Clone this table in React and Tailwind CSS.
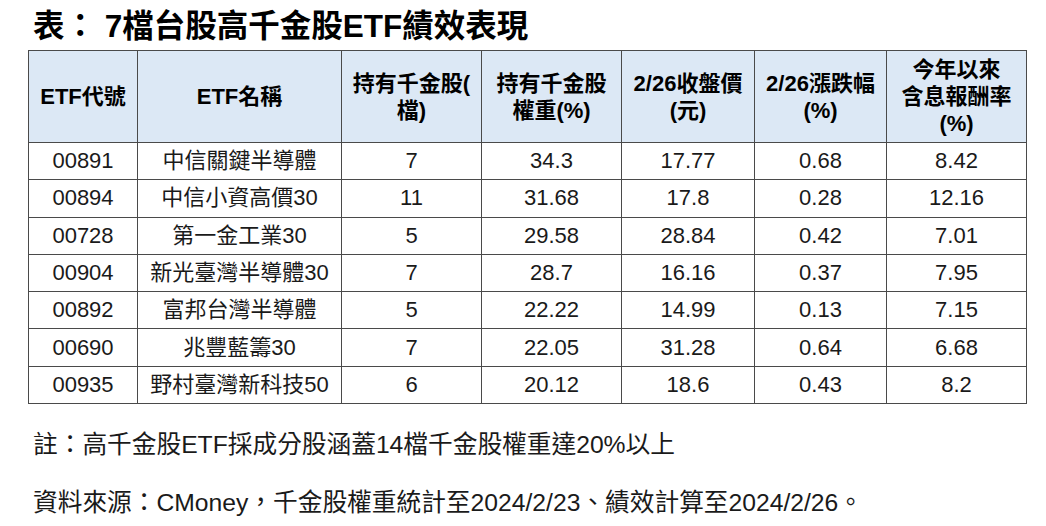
import React from 'react';

const rows = [
  ['00891', '中信關鍵半導體', '7', '34.3', '17.77', '0.68', '8.42'],
  ['00894', '中信小資高價30', '11', '31.68', '17.8', '0.28', '12.16'],
  ['00728', '第一金工業30', '5', '29.58', '28.84', '0.42', '7.01'],
  ['00904', '新光臺灣半導體30', '7', '28.7', '16.16', '0.37', '7.95'],
  ['00892', '富邦台灣半導體', '5', '22.22', '14.99', '0.13', '7.15'],
  ['00690', '兆豐藍籌30', '7', '22.05', '31.28', '0.64', '6.68'],
  ['00935', '野村臺灣新科技50', '6', '20.12', '18.6', '0.43', '8.2'],
];

const widths = ['w-[109px]', 'w-[204px]', 'w-[140px]', 'w-[140px]', 'w-[133px]', 'w-[132px]', 'w-[140px]'];

const headers = [
  ['ETF代號'],
  ['ETF名稱'],
  ['持有千金股(', '檔)'],
  ['持有千金股', '權重(%)'],
  ['2/26收盤價', '(元)'],
  ['2/26漲跌幅', '(%)'],
  ['今年以來', '含息報酬率', '(%)'],
];

const App = () => {
  return (
    <div className="w-[1046px] h-[526px] bg-white overflow-hidden text-[#1a1a1a] font-['Liberation_Sans','Noto_Sans_CJK_TC',sans-serif]">
      {/* Title */}
      <div className="h-[50px] pl-[33px] pt-[8px]">
        <h1 className="text-[31.5px] leading-[36px] font-bold text-black">表： 7檔台股高千金股ETF績效表現</h1>
      </div>

      {/* Table */}
      <div className="pl-[28px]">
        <table className="table-fixed border-collapse w-[998px]">
          <thead>
            <tr className="h-[92px] bg-[#dce8f5]">
              {headers.map((lines, i) => (
                <th key={i} className={`${widths[i]} border border-[#4a4a4a] p-0 text-center align-middle text-[22px] leading-[27px] font-bold text-black`}>
                  {lines.map((l, j) => (
                    <div key={j}>{l}</div>
                  ))}
                </th>
              ))}
            </tr>
          </thead>
          <tbody>
            {rows.map((row) => (
              <tr key={row[0]} className="h-[37.3px]">
                {row.map((cell, i) => (
                  <td key={i} className="border border-[#4a4a4a] p-0 text-center align-middle text-[22px] leading-[26px]">
                    {cell}
                  </td>
                ))}
              </tr>
            ))}
          </tbody>
        </table>
      </div>

      {/* Notes */}
      <div className="pl-[33px] pt-[26px] text-[24.7px] leading-[30px] text-[#1a1a1a]">
        <p>註：高千金股ETF採成分股涵蓋14檔千金股權重達20%以上</p>
        <p className="mt-[28px]">資料來源：CMoney，千金股權重統計至2024/2/23、績效計算至2024/2/26。</p>
      </div>
    </div>
  );
};

export default App;
